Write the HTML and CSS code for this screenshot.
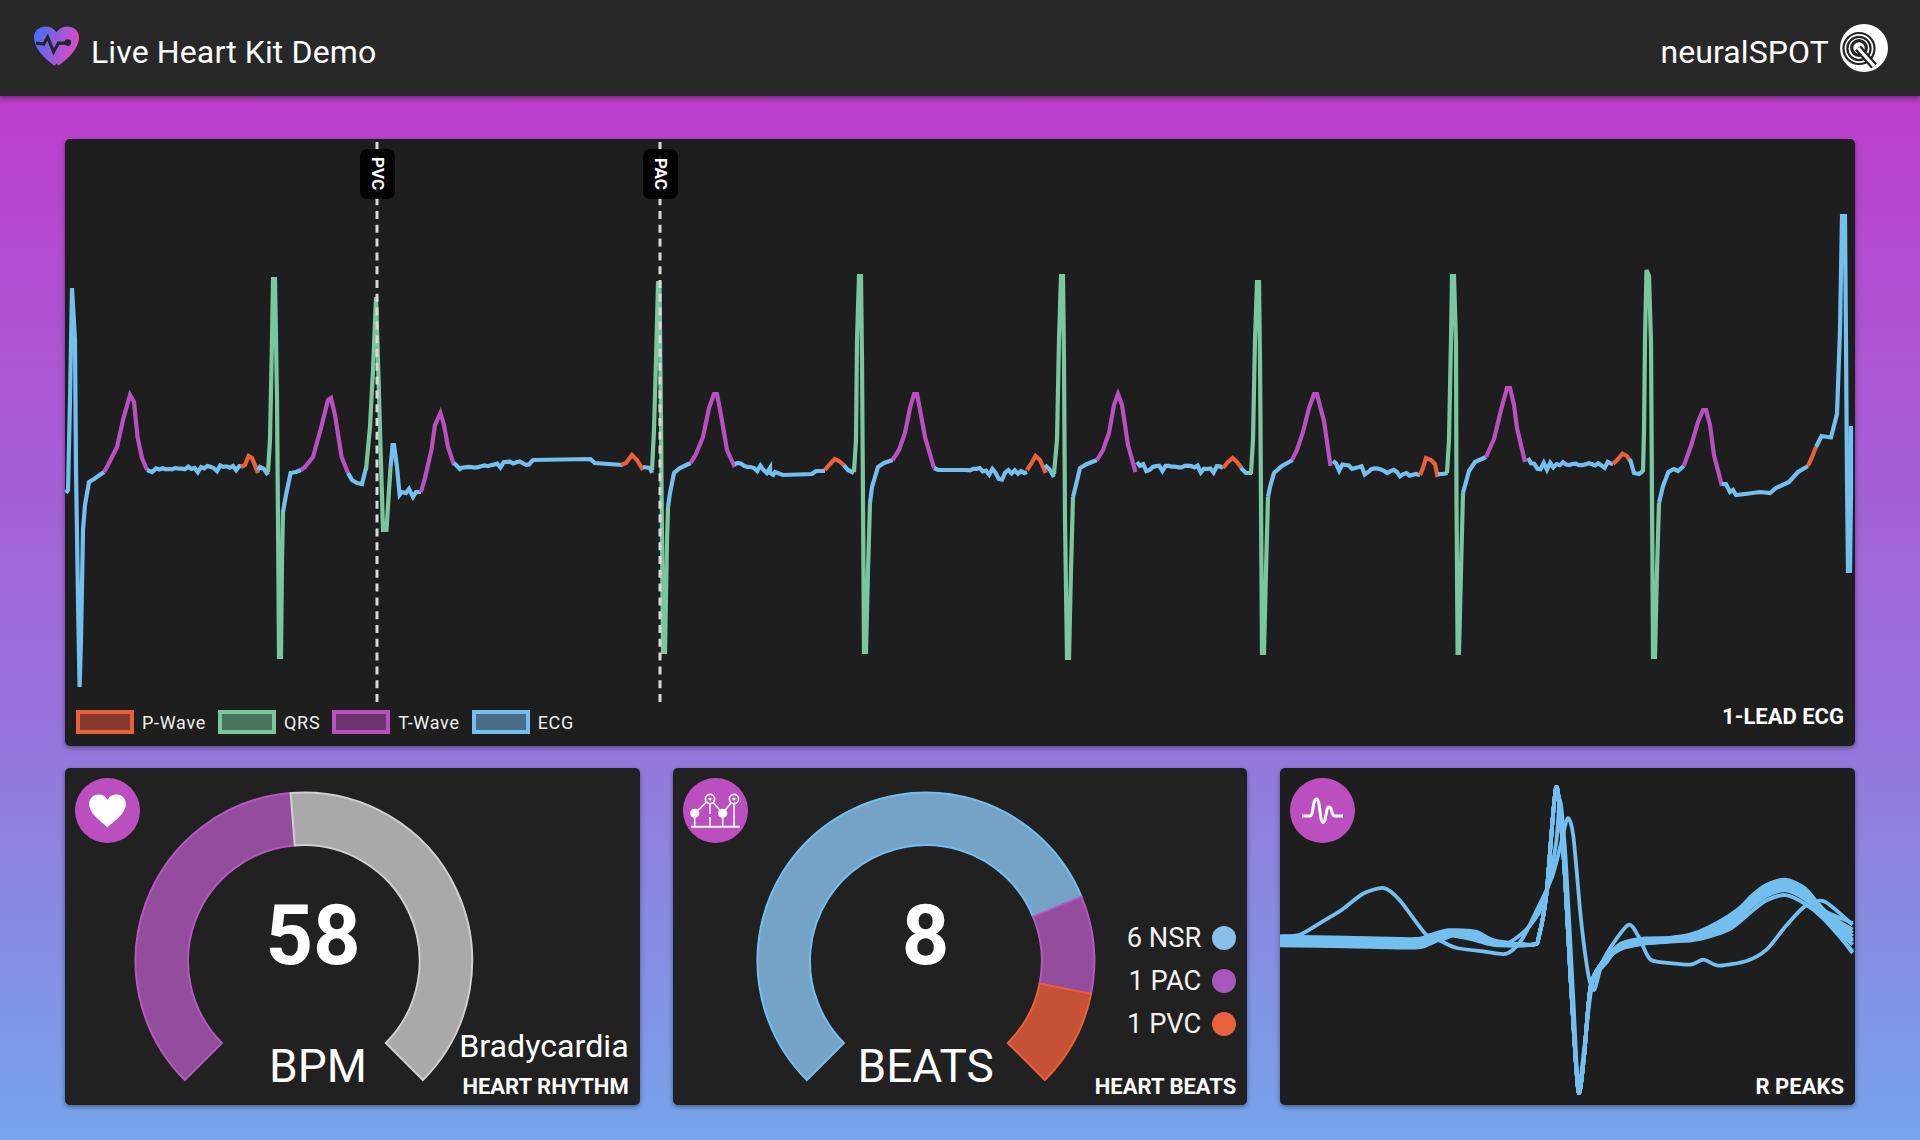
FILE: index.html
```html
<!DOCTYPE html>
<html lang="en">
<head>
  <meta charset="UTF-8" />
  <meta name="viewport" content="width=device-width, initial-scale=1.0" />
  <title>Live Heart Kit Demo</title>
  <link rel="stylesheet" href="styles.css">
</head>
<body>
  <header class="topbar">
    <svg class="brand-heart" viewBox="0 0 46 40">
      <defs>
        <linearGradient id="heartFill" x1="0" y1="0" x2="1" y2="0.25">
          <stop offset="0" stop-color="#3f6ffb" />
          <stop offset="1" stop-color="#d94cc4" />
        </linearGradient>
      </defs>
      <path d="M23 38 L21 40 C14 35 0 24 0 11 C0 4 6 0 12 0 C17 0 21 3 23 6 C25 3 29 0 34 0 C40 0 46 4 46 11 C46 24 32 35 25 40 Z" fill="url(#heartFill)" />
      <path d="M2 17 L10 18 L14 11 L20 26 L25 17 L34 17" fill="none" stroke="#242424" stroke-width="3.2" />
      <circle cx="34.5" cy="16.5" r="3.4" fill="#242424" />
    </svg>
    <h1 class="title">Live Heart Kit Demo</h1>
    <span class="vendor">neuralSPOT</span>
    <svg class="vendor-logo" viewBox="0 0 48 48">
      <circle cx="24" cy="24" r="24" fill="#fff" />
      <circle cx="19" cy="24.5" r="15.5" fill="none" stroke="#242424" stroke-width="2.2" />
      <circle cx="19" cy="24.5" r="11.6" fill="none" stroke="#242424" stroke-width="2.2" />
      <circle cx="19" cy="24" r="7.3" fill="none" stroke="#242424" stroke-width="3.2" />
      <path d="M18 24 L34 42" stroke="#242424" stroke-width="7.6" />
      <path d="M18 24 L34 42" stroke="#fff" stroke-width="3.2" />
    </svg>
  </header>

  <main class="dashboard">
    <section class="card card-ecg">
      <svg class="chart" viewBox="65 139 1790 607">
        <g id="ecgTraces"></g>
        <line class="marker-line" x1="377" y1="142" x2="377" y2="703" />
        <line class="marker-line" x1="660" y1="142" x2="660" y2="703" />
      </svg>
      <div class="marker marker-pvc">PVC</div>
      <div class="marker marker-pac">PAC</div>
      <ul class="legend">
        <li class="legend-item"><span class="swatch swatch-p"></span>P-Wave</li>
        <li class="legend-item"><span class="swatch swatch-qrs"></span>QRS</li>
        <li class="legend-item"><span class="swatch swatch-t"></span>T-Wave</li>
        <li class="legend-item"><span class="swatch swatch-ecg"></span>ECG</li>
      </ul>
      <div class="corner corner-ecg"><span class="caption">1-LEAD ECG</span></div>
    </section>

    <section class="card-row">
      <div class="card card-small">
        <svg class="badge" viewBox="0 0 65 65">
          <circle cx="32.5" cy="32.5" r="32.5" fill="#bb4fc0" />
          <path transform="translate(32.5 33) scale(.94) translate(-32.5 -34.5)" d="M32.5 52 C27 46 13 38 13 27 C13 20.5 18 17 23 17 C27 17 30.5 19 32.5 22.5 C34.5 19 38 17 42 17 C47 17 52 20.5 52 27 C52 38 38 46 32.5 52 Z" fill="#fff" />
        </svg>
        <svg class="gauge" viewBox="0 0 575 337">
          <path class="arc arc-purple" d="M119.9 311.1 A168.5 168.5 0 0 1 225.8 24 L229.9 76.4 A116 116 0 0 0 157 274 Z" />
          <path class="arc arc-gray" d="M225.8 24 A168.5 168.5 0 0 1 358.1 311.1 L321 274 A116 116 0 0 0 229.9 76.4 Z" />
        </svg>
        <div class="reading reading-bpm">58</div>
        <div class="unit unit-bpm">BPM</div>
        <div class="corner">
          <span class="status">Bradycardia</span>
          <span class="caption">HEART RHYTHM</span>
        </div>
      </div>

      <div class="card card-small">
        <svg class="badge" viewBox="0 0 65 65">
          <circle cx="32.5" cy="32.5" r="32.5" fill="#bb4fc0" />
          <g fill="none" stroke="#fff" stroke-width="1.6">
            <path d="M8 48.7 H57" stroke-width="2" />
            <path d="M11.7 35.3 L27 21 L39.7 35.3 L51 21" />
            <path d="M11.7 38 V48 M27 26 V36 M27 39 V48 M39.7 38 V48 M51 26 V48" />
            <circle cx="27" cy="21" r="4.6" fill="#bb4fc0" />
            <circle cx="51" cy="21" r="4.6" fill="#bb4fc0" />
          </g>
          <circle cx="27" cy="21" r="1.5" fill="#fff" />
          <circle cx="51" cy="21" r="1.5" fill="#fff" />
          <circle cx="11.7" cy="35.3" r="4.6" fill="#fff" />
          <circle cx="39.7" cy="35.3" r="4.6" fill="#fff" />
        </svg>
        <svg class="gauge" viewBox="0 0 575 337">
          <path class="arc arc-blue" d="M133.9 311.1 A168.5 168.5 0 1 1 408.7 127.5 L360.2 147.6 A116 116 0 1 0 171 274 Z" />
          <path class="arc arc-purple" d="M408.7 127.5 A168.5 168.5 0 0 1 418.3 224.9 L366.8 214.6 A116 116 0 0 0 360.2 147.6 Z" />
          <path class="arc arc-orange" d="M418.3 224.9 A168.5 168.5 0 0 1 372.1 311.1 L335 274 A116 116 0 0 0 366.8 214.6 Z" />
        </svg>
        <div class="reading reading-beats">8</div>
        <div class="unit unit-beats">BEATS</div>
        <div class="corner">
          <ul class="beat-list">
            <li class="beat-row">6 NSR<span class="dot dot-nsr"></span></li>
            <li class="beat-row">1 PAC<span class="dot dot-pac"></span></li>
            <li class="beat-row">1 PVC<span class="dot dot-pvc"></span></li>
          </ul>
          <span class="caption">HEART BEATS</span>
        </div>
      </div>

      <div class="card card-small">
        <svg class="chart" viewBox="0 0 575 337"><g id="peakTraces"></g></svg>
        <svg class="badge" viewBox="0 0 65 65">
          <circle cx="32.5" cy="32.5" r="32.5" fill="#bb4fc0" />
          <path d="M12 38 H20 C23.5 38 22.5 21 26.5 21 C30.5 21 29.5 44.5 33 44.5 C36.5 44.5 35.5 29 39 29 C42.5 29 41 38 45 38 H53" fill="none" stroke="#fff" stroke-width="3" />
        </svg>
        <div class="corner"><span class="caption">R PEAKS</span></div>
      </div>
    </section>
  </main>

  <script src="app.js"></script>
</body>
</html>
```

FILE: styles.css
```css
* {
  box-sizing: border-box;
}
body {
  margin: 0;
  min-height: 100vh;
  font-family: Roboto, sans-serif;
  color: #fff;
  background: linear-gradient(180deg, #c236ca 0%, #9577dc 66%, #76a5ea 100%);
}
ul {
  list-style: none;
  margin: 0;
  padding: 0;
}

.topbar {
  height: 96px;
  display: flex;
  align-items: center;
  padding: 0 32px 0 34px;
  background-color: #282828;
  box-shadow: 0 2px 6px rgba(0, 0, 0, 0.45);
}
.brand-heart {
  width: 45px;
  height: 40px;
  margin: 0 12px 5px 0;
}
.title {
  flex: 1;
  margin: 8px 0 0;
  font-size: 32px;
  font-weight: 400;
  letter-spacing: 0.12px;
}
.vendor {
  font-size: 32px;
  letter-spacing: 0.1px;
  margin: 8px 11px 0 0;
}
.vendor-logo {
  width: 48px;
  height: 48px;
}

.dashboard {
  display: flex;
  flex-direction: column;
  gap: 22px;
  padding: 43px 65px 0;
}
.card {
  position: relative;
  background-color: #1e1e1e;
  border-radius: 5px;
  box-shadow: 0 2px 5px rgba(0, 0, 0, 0.4);
  overflow: hidden;
}
.card-ecg {
  height: 607px;
}
.card-row {
  display: grid;
  grid-template-columns: repeat(3, 1fr);
  gap: 33px;
}
.card-small {
  height: 337px;
  background-color: #212121;
}
.card-small:last-child {
  background-color: #1e1e1e;
}
.chart,
.gauge {
  position: absolute;
  top: 0;
  left: 0;
  width: 100%;
  height: 100%;
}
.gauge {
  top: 1px;
}

.trace {
  fill: none;
  stroke-width: 4.2;
}
.peak-trace {
  fill: none;
  stroke: #73bfef;
  stroke-width: 3.8;
}
.marker-line {
  stroke: #d8d8d8;
  stroke-width: 3;
  stroke-dasharray: 8 5.8;
}
.marker {
  position: absolute;
  top: 10px;
  width: 35px;
  height: 50px;
  display: flex;
  align-items: center;
  justify-content: center;
  writing-mode: vertical-rl;
  font-size: 17px;
  font-weight: 700;
  border-radius: 7px;
  background-color: rgba(0, 0, 0, 0.88);
}
.marker-pvc {
  left: 295px;
}
.marker-pac {
  left: 578px;
}

.legend {
  position: absolute;
  left: 11px;
  bottom: 12px;
  display: flex;
  align-items: center;
  font-size: 18px;
  letter-spacing: 0.7px;
  color: #eee;
}
.legend-item {
  display: flex;
  align-items: center;
  margin-right: 12px;
}
.swatch {
  width: 58px;
  height: 24px;
  margin-right: 8px;
  border: 4px solid;
}
.swatch-p {
  border-color: #e9603c;
  background-color: #83392b;
}
.swatch-qrs {
  border-color: #7ac6a0;
  background-color: #4a735e;
}
.swatch-t {
  border-color: #b94fc1;
  background-color: #6c3570;
}
.swatch-ecg {
  border-color: #73bfef;
  background-color: #4a6e88;
}

.corner {
  position: absolute;
  right: 11px;
  bottom: 5px;
  display: flex;
  flex-direction: column;
  align-items: flex-end;
}
.corner-ecg {
  bottom: 16px;
}
.caption {
  font-size: 22px;
  font-weight: 700;
  line-height: 26px;
}
.status {
  font-size: 32.2px;
  line-height: 36px;
  margin-bottom: 10px;
}
.beat-list {
  display: flex;
  flex-direction: column;
  gap: 19px;
  margin-bottom: 38px;
}
.beat-row {
  display: flex;
  align-items: center;
  justify-content: flex-end;
  font-size: 27.3px;
  line-height: 24px;
  color: #f2f2f2;
}
.dot {
  width: 24px;
  height: 24px;
  margin-left: 11px;
  border-radius: 50%;
}
.dot-nsr {
  background-color: #88c0ea;
}
.dot-pac {
  background-color: #a855c0;
}
.dot-pvc {
  background-color: #e9603c;
}

.badge {
  position: absolute;
  top: 10px;
  left: 10px;
  width: 65px;
  height: 65px;
}
.arc {
  stroke-width: 2;
}
.arc-purple {
  fill: #944c9c;
  stroke: #b558c0;
}
.arc-gray {
  fill: #a9a9a9;
  stroke: #cfcfcf;
}
.arc-blue {
  fill: #75a3c8;
  stroke: #73bfef;
}
.arc-orange {
  fill: #c55235;
  stroke: #e9603c;
}

.reading {
  position: absolute;
  top: 119px;
  font-size: 83px;
  font-weight: 700;
  line-height: 97px;
  transform: translateX(-50%);
}
.reading-bpm {
  left: 248px;
}
.reading-beats {
  left: 253px;
}
.unit {
  position: absolute;
  top: 271px;
  font-size: 46px;
  font-weight: 400;
  line-height: 54px;
  transform: translateX(-50%);
}
.unit-bpm {
  left: 253px;
}
.unit-beats {
  left: 253px;
}
```

FILE: app.js
```js
const BLUE = "#73bfef";
const GREEN = "#7ac6a0";
const PURPLE = "#b94fc1";
const ORANGE = "#e9603c";
const NS = "http://www.w3.org/2000/svg";

// small repeatable random, so the picture is the same on each load
let seed = 7;
function rnd() {
  seed = (seed * 16807) % 2147483647;
  return seed / 2147483647;
}

// flat stretch of signal between two points, with a bit of noise
function noisy(x0, y0, x1, y1, amp) {
  const pts = [];
  for (let x = x0; x < x1; x += 3.2) {
    const t = (x - x0) / (x1 - x0);
    let jitter = (rnd() - 0.5) * amp;
    if (rnd() > 0.86) jitter += amp * 1.2;
    pts.push([x, y0 + (y1 - y0) * t + jitter]);
  }
  pts.push([x1, y1]);
  return pts;
}

const ecg = [
  [BLUE, [[66,493],[68,490],[70,400],[72,288],[75,340],[76,470],[78,600],[79.6,687],[81,640],[83,530],[85,505],[89,482],[94,479],[104,472]]],
  [PURPLE, [[104,472],[108,465],[117,447],[123,420],[130,395],[134,402],[137.5,437],[142,458],[147,470]]],
  [BLUE, [[147,470],[152,472],...noisy(153,469,241,466,3)]],
  [ORANGE, [[241,467],[245,465],[248.6,456],[252,458],[258,473]]],
  [BLUE, [[258,470],[260,467],[264,469],[268,475]]],
  [GREEN, [[268,472],[270,440],[272,340],[273,279],[275,279],[277,400],[278,520],[279,657],[281,657],[282,560],[283,510]]],
  [BLUE, [[283,512],[286,495],[290.6,473],[296,472],[301,470]]],
  [PURPLE, [[301,470],[305,467],[313,457],[321,428],[328,400],[331,398],[335,415],[341.6,457],[348,473]]],
  [BLUE, [[348,473],[352,480],[357,483],[362,484],[366,468]]],
  [GREEN, [[366,470],[370,427],[373,370],[376,297],[378,360],[380,430],[383,530],[386.5,530],[389,490],[390.6,467]]],
  [BLUE, [[390.6,467],[392.6,445],[394,445],[397,467],[399.6,495],[402,492],[406,493],[409,489],[413,497],[416,492],[421,492]]],
  [PURPLE, [[421,492],[425,478],[431.4,450],[435,425],[440.4,413],[444,425],[448,447],[454,465]]],
  [BLUE, [[454,463],[460,469],...noisy(462,468,533,460,2.5),[590.6,459],[594.7,463],[623,465]]],
  [ORANGE, [[621,465],[626,463],[632,455],[637,460],[643,470]]],
  [BLUE, [[643,467],[650,468],[652,473]]],
  [GREEN, [[652,470],[654,430],[656,360],[658,283],[659.5,283],[661,420],[662,540],[663,652],[665,652],[667,540],[668,507]]],
  [BLUE, [[668,507],[670,493],[674,473],[680,468],[690.6,463]]],
  [PURPLE, [[690.6,463],[696,454],[703,437],[709,408],[714,394],[717,394],[721,415],[727,450],[734.7,467]]],
  [BLUE, [[734.7,464],...noisy(738,465,770,468,4),...noisy(770,470,775,472,4),[783,475],[812,474],[816,471],[825,471]]],
  [ORANGE, [[825,470],[830,464],[834.7,459],[839,461],[843.7,465]]],
  [BLUE, [[843.7,465],[848,470],[854,473]]],
  [GREEN, [[854,472],[856,440],[857,340],[859,276],[861,276],[862,360],[863,500],[864,652],[866,652],[868,570],[870,503]]],
  [BLUE, [[870,503],[872,487],[878,467],[884,463],[892.6,460]]],
  [PURPLE, [[892.6,460],[899,450],[905,433],[910,408],[914,394],[917,394],[921,415],[925,437],[934,468]]],
  [BLUE, [[934,468],[938,470],[966,470],...noisy(970,470,1027,472,5)]],
  [ORANGE, [[1027,470],[1031,464],[1035.5,456],[1040,460],[1045.7,473]]],
  [BLUE, [[1045,465],[1050,470],[1054,477]]],
  [GREEN, [[1054,474],[1057,440],[1059,340],[1061,276],[1063,276],[1064,360],[1065,520],[1067,658],[1069,658],[1071,570],[1073,497]]],
  [BLUE, [[1073,497],[1076,485],[1080,468],[1087,464],[1097,460]]],
  [PURPLE, [[1097,460],[1103,450],[1109,433],[1114,405],[1118,394],[1122,405],[1128,445],[1135.5,472]]],
  [BLUE, [[1137,462],...noisy(1140,465,1223,468,3.5)]],
  [ORANGE, [[1223,468],[1228,462],[1232.6,458],[1237,462],[1241.6,468]]],
  [BLUE, [[1241,468],[1246,473],[1252,473]]],
  [GREEN, [[1251,474],[1253,440],[1255,340],[1257,282],[1259,282],[1260,360],[1261,500],[1262,653],[1264,653],[1266,570],[1268,497]]],
  [BLUE, [[1268,497],[1270,487],[1274,473],[1282,466],[1292.6,460]]],
  [PURPLE, [[1292,460],[1297,450],[1303,432],[1309,408],[1314,394],[1317,394],[1321,410],[1324,421],[1330.5,466]]],
  [BLUE, [[1333,461],...noisy(1336,465,1420,475,4)]],
  [ORANGE, [[1420,475],[1423,468],[1426,458],[1431,460],[1435,464],[1437.7,477]]],
  [BLUE, [[1438,474],[1443,474],[1447.6,473]]],
  [GREEN, [[1447,473],[1449,440],[1451,340],[1452,276],[1454,276],[1456,343],[1456.5,500],[1457.6,653],[1459,653],[1461,570],[1463,493]]],
  [BLUE, [[1463,493],[1469,471],[1475,462],[1486,457]]],
  [PURPLE, [[1486,457],[1494,439],[1501,410],[1507,388],[1510,388],[1514,405],[1517,428],[1525,462]]],
  [BLUE, [[1528,458],...noisy(1531,463,1613,464,4)]],
  [ORANGE, [[1613,464],[1618,459],[1622.5,453.6],[1627,456],[1630,461]]],
  [BLUE, [[1630,459],[1634,473],[1639,474],[1643,471]]],
  [GREEN, [[1643,472],[1644,432],[1645,340],[1646.5,270],[1649,276],[1651,343],[1652,500],[1653,657],[1655,657],[1657,570],[1659,503]]],
  [BLUE, [[1659,503],[1663,486],[1668.4,472],[1674,469],[1678,471],[1683.7,466]]],
  [PURPLE, [[1683.7,466],[1691,446],[1698,422],[1703,410],[1706,410],[1710,425],[1714,455],[1722,486]]],
  [BLUE, [[1722,484],[1726,484],[1730,492],[1733,490],[1736,495],[1745,494],[1760,492],[1770,493],[1776,488],[1789,482],[1798,472],[1808,466]]],
  [ORANGE, [[1808,466],[1812,457],[1816,447]]],
  [BLUE, [[1816,447],[1821.5,436],[1831,437.5],[1837,414],[1840,330],[1842,216],[1845,216],[1846,343],[1847,480],[1848,571],[1850,571],[1851,493],[1851,428],[1853,428]]],
];

function addLine(parent, color, pts) {
  const line = document.createElementNS(NS, "polyline");
  line.setAttribute("class", "trace");
  line.setAttribute("stroke", color);
  line.setAttribute("points", pts.map(p => p[0].toFixed(1) + "," + p[1].toFixed(1)).join(" "));
  parent.appendChild(line);
}

const ecgGroup = document.getElementById("ecgTraces");
ecg.forEach(seg => addLine(ecgGroup, seg[0], seg[1]));

// R peak overlay: points read off in a 1500 x 1010 box, scaled to the card
function smoothPath(pts) {
  const p = pts.map(q => [(q[0] - 28) / 2.613, (q[1] - 25) / 3]);
  let d = "M" + p[0][0].toFixed(1) + " " + p[0][1].toFixed(1);
  for (let i = 0; i < p.length - 1; i++) {
    const a = p[Math.max(i - 1, 0)], b = p[i], c = p[i + 1], e = p[Math.min(i + 2, p.length - 1)];
    const k = 0.13;
    d += " C" + (b[0] + (c[0] - a[0]) * k).toFixed(1) + " " + (b[1] + (c[1] - a[1]) * k).toFixed(1) +
         " " + (c[0] - (e[0] - b[0]) * k).toFixed(1) + " " + (c[1] - (e[1] - b[1]) * k).toFixed(1) +
         " " + c[0].toFixed(1) + " " + c[1].toFixed(1);
  }
  return d;
}

function normalBeat(base, t, end) {
  return [
    [28,545 + base],[200,548 + base],[380,552 + base],[420,540 + base],[470,520 + base * 0.6],[540,530 + base],
    [590,550 + base * 0.5],[690,555],[705,530],[725,400],[750,82],[770,300],[790,700],[808,995],[822,900],[840,680],
    [870,610],[920,560 + base * 0.6],[980,545 + base * 0.6],[1100,530 + t * 0.3],[1200,480 + t * 0.7],[1260,412 + t],
    [1300,378 + t],[1350,362 + t],[1400,388 + t],[1450,452 + t * 0.6],[1525,end],
  ];
}

const peaks = [
  normalBeat(-14, 0, 490), normalBeat(-8, 8, 510), normalBeat(-3, -2, 520), normalBeat(2, 14, 530),
  normalBeat(7, 4, 545), normalBeat(12, 30, 580), normalBeat(-10, 44, 575), normalBeat(10, 20, 540),
  [[28,530],[80,525],[140,485],[190,450],[245,402],[300,385],[340,420],[410,525],[450,545],[490,565],[560,575],[620,582],
   [660,540],[700,450],[740,350],[765,240],[780,175],[795,230],[815,480],[835,650],[850,690],[870,610],[900,550],[940,495],
   [965,530],[990,590],[1010,605],[1100,615],[1135,600],[1175,618],[1250,603],[1300,570],[1350,500],[1400,440],[1450,425],[1525,495]],
  [[28,540],[300,545],[400,545],[450,540],[490,525],[560,540],[620,552],[680,500],[720,420],[750,250],[760,120],[775,300],[795,720],
   [808,980],[825,850],[845,670],[880,610],[930,555],[1100,525],[1200,470],[1300,385],[1350,375],[1400,400],[1450,470],[1525,555]],
];

const peakGroup = document.getElementById("peakTraces");
peaks.forEach(pts => {
  const path = document.createElementNS(NS, "path");
  path.setAttribute("class", "peak-trace");
  path.setAttribute("d", smoothPath(pts));
  peakGroup.appendChild(path);
});
```
